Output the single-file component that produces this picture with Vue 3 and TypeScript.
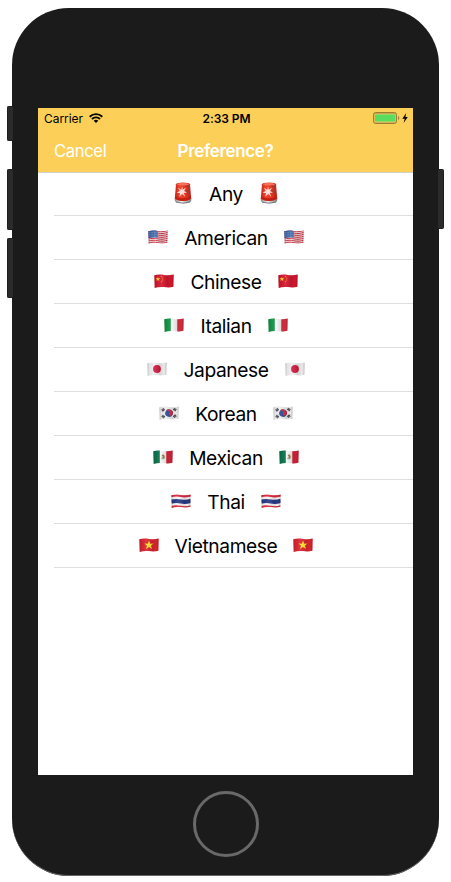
<script setup lang="ts">
interface Cuisine {
  name: string
  icon: string
}

const cuisines: Cuisine[] = [
  { name: 'Any', icon: 'siren' },
  { name: 'American', icon: 'us' },
  { name: 'Chinese', icon: 'cn' },
  { name: 'Italian', icon: 'it' },
  { name: 'Japanese', icon: 'jp' },
  { name: 'Korean', icon: 'kr' },
  { name: 'Mexican', icon: 'mx' },
  { name: 'Thai', icon: 'th' },
  { name: 'Vietnamese', icon: 'vn' },
]

const stripes = [0, 1, 2, 3, 4, 5, 6]
</script>

<template>
  <svg class="sprites" width="0" height="0" aria-hidden="true">
    <defs>
      <clipPath id="wave">
        <path d="M.3 1.2C3.5.3 6.5.4 10 .9S16.5 1.3 19.7.4L19.4 12.8C16.5 13.6 13.5 13.6 10 13.1S3.5 13 .7 13.9Z" />
      </clipPath>
      <linearGradient id="shade" x1="0" x2="1" y1="0" y2="0">
        <stop offset="0" stop-color="#000" stop-opacity=".22" />
        <stop offset=".12" stop-color="#000" stop-opacity=".05" />
        <stop offset=".35" stop-color="#fff" stop-opacity=".08" />
        <stop offset=".65" stop-color="#000" stop-opacity=".12" />
        <stop offset=".85" stop-color="#000" stop-opacity=".02" />
        <stop offset="1" stop-color="#000" stop-opacity=".22" />
      </linearGradient>
      <linearGradient id="lamp" x1="0" x2="1" y1="0" y2="0">
        <stop offset="0" stop-color="#c52318" />
        <stop offset=".3" stop-color="#f0472f" />
        <stop offset=".7" stop-color="#e2331f" />
        <stop offset="1" stop-color="#b51f15" />
      </linearGradient>
      <linearGradient id="base" x1="0" x2="1" y1="0" y2="0">
        <stop offset="0" stop-color="#8b9092" />
        <stop offset=".4" stop-color="#eceeee" />
        <stop offset="1" stop-color="#7d8284" />
      </linearGradient>
    </defs>

    <symbol id="siren" viewBox="0 0 20 22">
      <path d="M1.7 16.2Q10 19.6 18.3 16.2V18.3Q18 21.5 10 21.6T1.7 18.3Z" fill="url(#base)" />
      <path d="M3 20Q10 22.4 17 20" fill="none" stroke="#666b6e" stroke-width=".8" />
      <path d="M3 2.3Q3.4.5 10 .5T17 2.3L18.2 16.5Q16 18.9 10 18.9T1.8 16.5Z" fill="url(#lamp)" />
      <path d="M3.3 2.3Q6 1 10 1T16.7 2.3Q14 3.5 10 3.5T3.3 2.3Z" fill="#f5735e" />
      <path d="M12 4.8L16.2 4 16 8 13.5 9.5 15.8 11" fill="none" stroke="#a63b35" stroke-width="1.5" />
      <path d="M2.4 14.3Q10 18 17.8 14.3L18 16.5Q14 19 10 19T2 16.5Z" fill="#c31f13" />
      <path d="M9.2 4.2L9.7 7.8 13 5.4 11.1 9 14 10.5 10.8 10.9 12.2 14.8 9.2 12 6.4 14.5 7.1 11.2 3.6 10.5 6.8 9 5 5.8 8.2 7.7Z" fill="#ffe9e6" opacity=".92" />
    </symbol>

    <symbol id="us" viewBox="0 0 20 14">
      <g clip-path="url(#wave)">
        <rect width="20" height="14" fill="#f5e9ea" />
        <path
          v-for="n in stripes"
          :key="n"
          :transform="`translate(0 ${n * 1.92})`"
          d="M0 1.5C3.5.4 6.5.5 10 1.2S16.5 1.6 20 .5"
          fill="none"
          stroke="#cf2c3d"
          stroke-width=".98"
        />
        <path d="M0 0H9.6V7.8C6.5 7.2 3.5 7.3 0 8.3Z" fill="#3c63a8" />
        <path d="M1.2 2.6H9M1.2 4.3H9M1.2 6H9" stroke="#a9bddd" stroke-width=".65" stroke-dasharray=".7 .9" />
        <rect width="20" height="14" fill="url(#shade)" />
      </g>
    </symbol>

    <symbol id="cn" viewBox="0 0 20 14">
      <g clip-path="url(#wave)">
        <rect width="20" height="14" fill="#d5172f" />
        <path d="M3.9 2.8L4.5 4.3 6.2 4.3 4.9 5.4 5.4 7 3.9 6 2.4 7 2.9 5.4 1.6 4.3 3.3 4.3Z" fill="#ffd62e" />
        <g fill="#f7b92c"><circle cx="7.3" cy="2.5" r=".55" /><circle cx="8.8" cy="4" r=".55" /><circle cx="8.8" cy="6" r=".55" /><circle cx="7.4" cy="7.7" r=".55" /></g>
        <rect width="20" height="14" fill="url(#shade)" />
      </g>
    </symbol>

    <symbol id="it" viewBox="0 0 20 14">
      <g clip-path="url(#wave)">
        <rect width="20" height="14" fill="#f8f7f8" />
        <rect width="6.8" height="14" fill="#159548" />
        <rect x="13.3" width="6.7" height="14" fill="#d72d40" />
        <rect width="20" height="14" fill="url(#shade)" />
      </g>
    </symbol>

    <symbol id="jp" viewBox="0 0 20 14">
      <g clip-path="url(#wave)">
        <rect width="20" height="14" fill="#f1f0f1" />
        <ellipse cx="10" cy="7.1" rx="3.9" ry="4" fill="#d01c42" />
        <rect width="20" height="14" fill="url(#shade)" />
      </g>
    </symbol>

    <symbol id="kr" viewBox="0 0 20 14">
      <g clip-path="url(#wave)">
        <rect width="20" height="14" fill="#f0eff0" />
        <g transform="rotate(24 10 7.1)">
          <circle cx="10" cy="7.1" r="3.8" fill="#294b9b" />
          <path d="M6.2 7.1A3.8 3.8 0 0 1 13.8 7.1A1.9 1.9 0 0 1 10 7.1A1.9 1.9 0 0 0 6.2 7.1Z" fill="#d32b43" />
        </g>
        <g stroke="#353238" stroke-width="2.6" stroke-dasharray=".8 .25">
          <path d="M3 4.7L5.5 2.9M14.6 11L17 9.2M3.1 9.7L5.5 11.4M14.6 2.7L17 4.4" />
        </g>
        <rect width="20" height="14" fill="url(#shade)" />
      </g>
    </symbol>

    <symbol id="mx" viewBox="0 0 20 14">
      <g clip-path="url(#wave)">
        <rect width="20" height="14" fill="#f8f7f6" />
        <rect width="6.8" height="14" fill="#0c7650" />
        <rect x="13.3" width="6.7" height="14" fill="#d02337" />
        <path d="M8.2 8Q9.7 10.3 11.9 7.6" fill="none" stroke="#71986c" stroke-width=".9" />
        <path d="M8.6 5.2L10.2 4.3 11.7 6 11 8.4 9.2 8.1 9.7 6.4Z" fill="#9c7142" />
        <rect width="20" height="14" fill="url(#shade)" />
      </g>
    </symbol>

    <symbol id="th" viewBox="0 0 20 14">
      <g clip-path="url(#wave)" fill="none">
        <rect width="20" height="14" fill="#f8f5f7" />
        <path d="M0 2.2C3.5 1.1 6.5 1.2 10 1.9S16.5 2.3 20 1.2" stroke="#db2b3e" stroke-width="2.4" />
        <path d="M0 7.8C3.5 6.7 6.5 6.8 10 7.5S16.5 7.9 20 6.8" stroke="#293b87" stroke-width="4.2" />
        <path d="M0 13.2C3.5 12.1 6.5 12.2 10 12.9S16.5 13.3 20 12.2" stroke="#db2b3e" stroke-width="2.2" />
        <rect width="20" height="14" fill="url(#shade)" />
      </g>
    </symbol>

    <symbol id="vn" viewBox="0 0 20 14">
      <g clip-path="url(#wave)">
        <rect width="20" height="14" fill="#dc2530" />
        <path d="M10 2.5L11.2 5.7 14.5 5.6 12 7.7 13 11.1 10 9.1 7 11.1 8 7.7 5.5 5.6 8.8 5.7Z" fill="#ffe52b" />
        <rect width="20" height="14" fill="url(#shade)" />
      </g>
    </symbol>
  </svg>

  <main class="stage">
    <div class="phone">
      <i class="key mute"></i>
      <i class="key volume-up"></i>
      <i class="key volume-down"></i>
      <i class="key power"></i>

      <section class="screen">
        <header class="header">
          <div class="status">
            <div class="carrier">
              <span class="label">Carrier</span>
              <svg class="wifi" viewBox="0 0 14 10" width="14" height="10">
                <path d="M.7 3.7A9.1 9.1 0 0 1 13.3 3.7M3 6A5.8 5.8 0 0 1 11 6" fill="none" stroke="#000" stroke-width="1.9" />
                <path d="M4.7 7.7A3.4 3.4 0 0 1 9.3 7.7L7 10Z" />
              </svg>
            </div>
            <span class="label time">2:33 PM</span>
            <svg class="battery" viewBox="0 0 36 12" width="36" height="12">
              <rect x=".5" y=".5" width="23" height="11" rx="2" fill="#c9a548" stroke="#9f7d35" />
              <rect x="1.5" y="2" width="21" height="8.3" fill="#fbd266" />
              <rect x="2" y="2.4" width="20" height="7.2" fill="#5bdc5f" />
              <path d="M25 4Q26.3 4.5 26.3 6T25 8Z" fill="#9f7d35" />
              <path d="M33.2 1L29.3 6.7H31.7L30.6 11 34.8 5.1H32.4Z" />
            </svg>
          </div>
          <nav class="nav">
            <span class="cancel">Cancel</span>
            <span class="title">Preference?</span>
          </nav>
        </header>

        <ul class="list">
          <li v-for="item in cuisines" :key="item.name" class="row">
            <svg class="icon" :class="{ siren: item.icon === 'siren' }"><use :href="`#${item.icon}`" /></svg>
            <span class="name">{{ item.name }}</span>
            <svg class="icon" :class="{ siren: item.icon === 'siren' }"><use :href="`#${item.icon}`" /></svg>
          </li>
        </ul>
      </section>

      <div class="home"></div>
    </div>
  </main>
</template>

<style>
body {
  background: #fff;
}
</style>

<style scoped>
.sprites {
  position: absolute;
}
.stage {
  box-sizing: border-box;
  width: 451px;
  height: 882px;
  padding: 8px 12px 0;
  overflow: hidden;
  font-family: Inter, "Liberation Sans", sans-serif;
}
.phone {
  position: relative;
  box-sizing: border-box;
  width: 427px;
  height: 868px;
  padding: 100px 26px 0;
  border-radius: 57px;
  background: #1b1b1b;
  box-shadow: inset 0 -1px 0 #666;
}
.key {
  position: absolute;
  left: -5px;
  width: 6px;
  box-sizing: border-box;
  background: #2b2b2b;
  border: 1px solid #1d1d1d;
  border-right: 0;
  border-radius: 2px 0 0 2px;
}
.mute {
  top: 98px;
  height: 35px;
}
.volume-up {
  top: 161px;
  height: 61px;
}
.volume-down {
  top: 230px;
  height: 60px;
}
.power {
  top: 161px;
  left: 426px;
  height: 60px;
  border: 1px solid #1d1d1d;
  border-left: 0;
  border-radius: 0 2px 2px 0;
}
.screen {
  height: 667px;
  background: #fff;
}
.header {
  height: 64px;
  background: #fbcf58;
  box-shadow: 0 1px 0 #d5d2cb;
}
.status {
  display: grid;
  grid-template-columns: 1fr auto 1fr;
  align-items: center;
  height: 20px;
  padding: 0 4px 0 6px;
  font-size: 12px;
  line-height: 20px;
}
.label {
  padding-top: 1px;
  line-height: 19px;
  letter-spacing: -0.05px;
}
.carrier {
  display: flex;
  align-items: center;
  gap: 6px;
}
.time {
  font-weight: 600;
}
.battery {
  justify-self: end;
}
.nav {
  display: grid;
  grid-template-columns: 1fr auto 1fr;
  align-items: center;
  height: 44px;
  padding: 1px 16px 0;
  box-sizing: border-box;
  color: #fff;
  font-size: 17px;
  letter-spacing: -0.35px;
}
.cancel {
  font-size: 16.6px;
}
.title {
  font-weight: 600;
}
.list {
  margin: 0;
  padding: 0 0 0 16px;
  list-style: none;
}
.row {
  display: flex;
  justify-content: center;
  align-items: center;
  gap: 16px;
  box-sizing: border-box;
  height: 44px;
  padding-right: 15px;
  border-bottom: 1px solid #dededf;
  font-size: 19.2px;
  letter-spacing: -0.4px;
  color: #000;
}
.icon {
  width: 20px;
  height: 14px;
  margin-bottom: 1px;
}
.siren {
  height: 22px;
}
.home {
  box-sizing: border-box;
  width: 66px;
  height: 66px;
  margin: 16px auto 0;
  border: 3px solid #696969;
  border-radius: 50%;
}
</style>
